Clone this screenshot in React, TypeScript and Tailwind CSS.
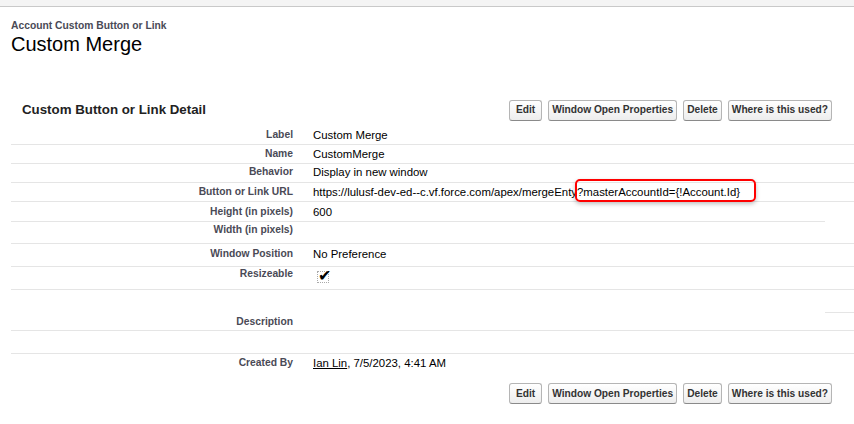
import React from "react";

const font = { fontFamily: '"Liberation Sans", Arial, sans-serif' };

function Btn({ children, min }: { children: React.ReactNode; min?: number }) {
  return (
    <div
      className="h-[21px] px-[3px] flex items-center justify-center rounded-[3px] border border-[#b5b5b5] border-b-[#8a8a8a] bg-gradient-to-b from-white to-[#ededed] text-[10.2px] font-bold text-[#333] whitespace-nowrap"
      style={min ? { minWidth: min } : undefined}
    >
      {children}
    </div>
  );
}

function Buttons() {
  return (
    <div className="flex items-center gap-[6px]">
      <Btn min={33}>Edit</Btn>
      <Btn>Window Open Properties</Btn>
      <Btn>Delete</Btn>
      <Btn>Where is this used?</Btn>
    </div>
  );
}

type Row = {
  label: string;
  value?: React.ReactNode;
  h: number;
  pt: number;
  line?: "full" | "short" | "right" | "none";
};

function TableRow({ r }: { r: Row }) {
  const line = r.line ?? "full";
  return (
    <div className="relative flex" style={{ height: r.h }}>
      <div
        className="w-[292px] shrink-0 pr-[10px] text-right text-[10.3px] leading-[14px] font-bold text-[#4a4a56]"
        style={{ paddingTop: r.pt }}
      >
        {r.label}
      </div>
      <div className="pl-[10px] text-[11.4px] leading-[14px] text-black whitespace-nowrap" style={{ paddingTop: r.pt }}>
        {r.value}
      </div>
      {line === "full" && <div className="absolute left-0 right-0 bottom-0 h-px bg-[#e5e5e5]" />}
      {line === "short" && <div className="absolute left-0 right-[29px] bottom-0 h-px bg-[#e5e5e5]" />}
      {line === "right" && <div className="absolute right-0 w-[29px] bottom-0 h-px bg-[#e5e5e5]" />}
    </div>
  );
}

export default function App() {
  const rows: Row[] = [
    { label: "Label", value: "Custom Merge", h: 19, pt: 2 },
    { label: "Name", value: "CustomMerge", h: 19, pt: 2 },
    { label: "Behavior", value: "Display in new window", h: 19, pt: 1 },
    {
      label: "Button or Link URL",
      value: "https://lulusf-dev-ed--c.vf.force.com/apex/mergeEnty?masterAccountId={!Account.Id}",
      h: 19,
      pt: 2,
    },
    { label: "Height (in pixels)", value: "600", h: 20, pt: 3, line: "short" },
    { label: "Width (in pixels)", value: "", h: 22, pt: 1 },
    { label: "Window Position", value: "No Preference", h: 23, pt: 3 },
    {
      label: "Resizeable",
      value: (
        <span className="relative inline-block w-[12px] h-[12px] mt-[4px] ml-[4px] border border-dotted border-[#aaa]">
          <span className="absolute left-[0px] top-[-4px] text-[16px] leading-none text-black">✔</span>
        </span>
      ),
      h: 23,
      pt: 0,
    },
    { label: "", value: "", h: 23, pt: 0, line: "right" },
    { label: "Description", value: "", h: 18, pt: 2 },
    { label: "", value: "", h: 23, pt: 0 },
    {
      label: "Created By",
      value: (
        <span>
          <span className="underline">Ian Lin</span>, 7/5/2023, 4:41 AM
        </span>
      ),
      h: 22,
      pt: 2,
      line: "none",
    },
  ];

  return (
    <div className="relative w-[854px] h-[424px] overflow-hidden bg-white" style={font}>
      <div className="h-[7px] bg-[#f4f4f4] border-b border-[#c9c9c9]" />
      <div className="pl-[11px] pt-[12px]">
        <div className="text-[10.3px] font-bold text-[#4a4a56] leading-[14px]">Account Custom Button or Link</div>
        <div className="text-[20px] text-black leading-[22px]">Custom Merge</div>
      </div>
      <div className="pl-[11px] mt-[43px]">
        <div className="flex items-center justify-between pr-[22px] h-[24px]">
          <h2 className="pl-[11px] text-[13.3px] font-bold text-[#222]">Custom Button or Link Detail</h2>
          <Buttons />
        </div>
        <div className="mt-[4px]">
          {rows.map((r, i) => (
            <TableRow key={i} r={r} />
          ))}
        </div>
        <div className="flex justify-end pr-[22px] mt-[7px]">
          <Buttons />
        </div>
      </div>
      <div className="absolute left-[575px] top-[179px] w-[181px] h-[23px] border-2 border-[#ff0000] rounded-[5px] shadow-[0_2px_4px_rgba(0,0,0,0.25)]" />
    </div>
  );
}
